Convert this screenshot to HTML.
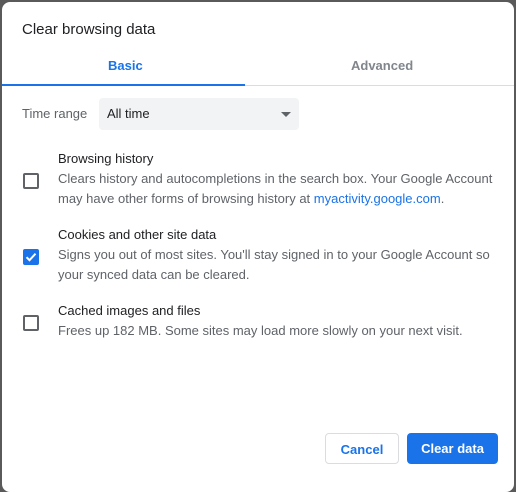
<!DOCTYPE html>
<html><head><style>
body{margin:0;width:516px;height:479px;background:#5a5a5a;overflow:hidden;font-family:"Liberation Sans",Arial,sans-serif;position:relative}
.d{position:absolute;left:2px;top:2px;width:512px;height:490px;background:#fff;border-radius:8px}
.t{position:absolute;left:20px;top:19px;font-size:15px;color:#202124}
.tab{position:absolute;top:56px;font-size:13px;font-weight:bold}
.line{position:absolute;left:0;right:0;top:83px;height:1px;background:#dadce0}
.ul{position:absolute;left:0;width:243px;top:82px;height:2px;background:#1a73e8}
.lab{position:absolute;left:20px;top:104px;font-size:13px;color:#5f6368}
.sel{position:absolute;left:97px;top:96px;width:200px;height:32px;background:#f1f3f4;border-radius:4px;font-size:13px;color:#202124}
.sel span{position:absolute;left:8px;top:8px}
.arr{position:absolute;right:8px;top:14px;width:0;height:0;border-left:5px solid transparent;border-right:5px solid transparent;border-top:5px solid #5f6368}
.it{position:absolute;left:56px;font-size:13px;line-height:20px;color:#202124}
.it .s{color:#5f6368}
.cb{position:absolute;left:21px;width:12px;height:12px;border:2px solid #5f6368;border-radius:2px}
.cb.on{background:#1a73e8;border-color:#1a73e8}
a{color:#1a73e8;text-decoration:none}
.btn{position:absolute;top:431px;height:31px;border-radius:4px;font-size:13px;font-weight:bold;text-align:center;line-height:31px;box-sizing:border-box}
</style></head><body>
<div class="d">
<div class="t">Clear browsing data</div>
<div class="tab" style="left:106px;color:#1a73e8">Basic</div>
<div class="tab" style="left:349px;color:#80868b">Advanced</div>
<div class="line"></div><div class="ul"></div>
<div class="lab">Time range</div>
<div class="sel"><span>All time</span><div class="arr"></div></div>
<div class="cb" style="top:171px"></div>
<div class="it" style="top:147px">Browsing history<br><span class="s">Clears history and autocompletions in the search box. Your Google Account<br>may have other forms of browsing history at <a>myactivity.google.com</a>.</span></div>
<div class="cb on" style="top:247px"><svg width="12" height="12" viewBox="0 0 12 12" style="position:absolute;left:0;top:0"><path d="M1.5 6.2l3 3 6-6.5" stroke="#fff" stroke-width="2" fill="none"/></svg></div>
<div class="it" style="top:223px">Cookies and other site data<br><span class="s">Signs you out of most sites. You'll stay signed in to your Google Account so<br>your synced data can be cleared.</span></div>
<div class="cb" style="top:313px"></div>
<div class="it" style="top:299px">Cached images and files<br><span class="s">Frees up 182 MB. Some sites may load more slowly on your next visit.</span></div>
<div class="btn" style="left:323px;width:74px;border:1px solid #dadce0;color:#1a73e8">Cancel</div>
<div class="btn" style="left:405px;width:91px;background:#1a73e8;color:#fff">Clear data</div>
</div>
</body></html>
